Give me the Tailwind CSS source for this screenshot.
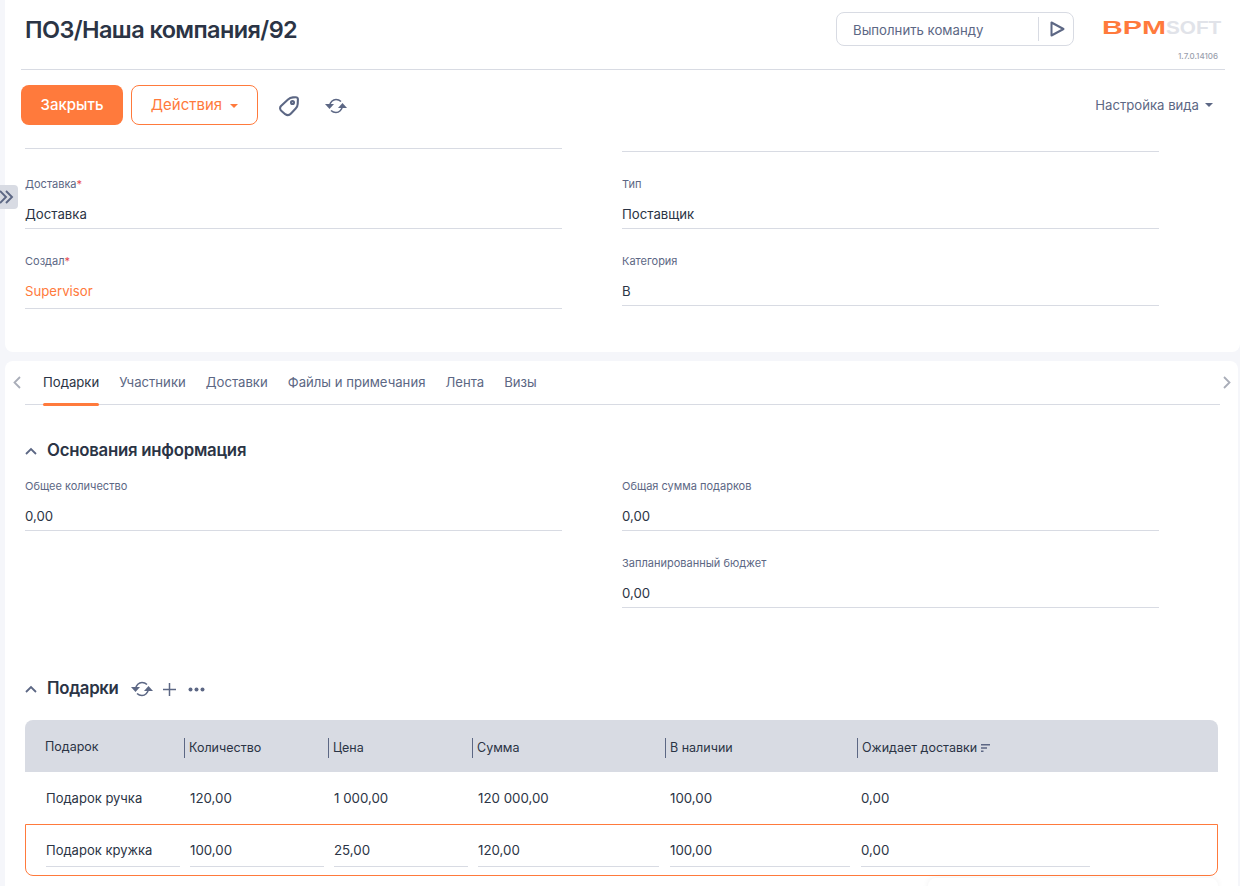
<!DOCTYPE html>
<html lang="ru">
<head>
<meta charset="UTF-8" />
<title>ПОЗ/Наша компания/92</title>
<script src="https://cdn.jsdelivr.net/npm/@tailwindcss/browser@4"></script>
</head>
<body class="bg-[#f5f6fa] font-['Inter',sans-serif] text-[13px] text-[#2b3445] h-[886px] w-[1240px] overflow-hidden relative">

<!-- panel toggle -->
<div class="absolute left-0 top-[185px] w-[18px] h-[24px] bg-[#d8dbe3] rounded-r flex items-center z-10">
  <svg width="15" height="14" viewBox="0 0 15 14" fill="none" stroke="#5c6784" stroke-width="1.900"><path d="M0 1l6 6-6 6M6 1l6 6-6 6"/></svg>
</div>

<!-- top card -->
<div class="ml-[5px] h-[352px] bg-white rounded-b-lg">
  <header class="ml-[16px] mr-[15px] h-[70px] border-b border-[#d8dbe3] flex items-start">
    <h1 class="ml-[4px] mt-[15px] text-[23.500px] leading-[30px] font-semibold text-[#2b3445] tracking-[-0.6px]">ПОЗ/Наша компания/92</h1>
    <div class="ml-auto mt-[12px] w-[238px] h-[34px] border border-[#d8dbe3] rounded-lg flex items-center">
      <span class="pl-[16px] pt-[3px] text-[#5c6784] text-[13.200px] flex-1">Выполнить команду</span>
      <span class="h-[24px] border-l border-[#d8dbe3]"></span>
      <svg class="ml-[11px] mr-[8px]" width="15" height="16" viewBox="0 0 15 16" fill="none" stroke="#5c6784" stroke-width="2" stroke-linejoin="round"><path d="M1.500 1.500v13l12-6.500z"/></svg>
    </div>
    <!-- logo -->
    <div class="w-[151px] mt-[12px] flex flex-col items-end">
      <div class="h-[32px] w-[119px] mr-[4px] flex items-center font-['Liberation_Sans',sans-serif] font-bold text-[18px] whitespace-nowrap">
        <span class="w-[64px] text-[#ff7a3c] scale-x-[1.6] origin-left">BPM</span><span class="w-[55px] text-[#e1e3e9] scale-x-[1.15] origin-left">SOFT</span>
      </div>
      <span class="mt-[7px] mr-[7px] text-[8px] leading-[10px] text-[#9aa0ad] font-medium">1.7.0.14106</span>
    </div>
  </header>

  <div class="ml-[16px] mr-[15px] h-[40px] mt-[15px] flex items-center">
    <button class="w-[102px] h-[40px] pt-[1px] rounded-lg bg-[#ff7a3c] text-white text-[15px] font-medium">Закрыть</button>
    <button class="ml-[8px] w-[127px] h-[40px] pt-[1px] rounded-lg border border-[#ff7a3c] text-[#ff7a3c] text-[15px] flex items-center justify-center gap-[8px]">Действия <span class="w-0 h-0 border-x-[4px] border-x-transparent border-t-[4px] border-t-[#ff7a3c]"></span></button>
    <svg class="ml-[21px] mt-[3px]" width="20" height="21" viewBox="0 0 20 21" fill="none" stroke="#5c6784" stroke-width="2.100" stroke-linejoin="round"><path d="M2 10L9 3.500C10.500 2.200 12 1.600 14 1.400L16.500 1.200C18 1.100 19 2 18.900 3.500L18.700 8C18.600 10 18 11.300 16.700 12.600L12 17.500C10.500 19.200 8 19.500 6.200 18.200L2.500 15C.8 13.500 .6 11.500 2 10z"/><circle cx="13.500" cy="6.500" r="1.500"/></svg>
    <svg class="ml-[26px] mt-[1px]" width="22" height="16" viewBox="0 0 22 16" fill="none"><use href="#sync"/></svg>
    <span class="ml-auto mr-[12px] pt-[1px] text-[#5c6784] text-[13.150px] flex items-center gap-[6px]">Настройка вида <span class="w-0 h-0 border-x-[4px] border-x-transparent border-t-[4px] border-t-[#5c6784]"></span></span>
  </div>

  <div class="ml-[20px] mt-[23px] grid grid-cols-[537px_537px] gap-x-[60px]">
    <div class="h-[1px] bg-[#d8dbe3]"></div>
    <div class="h-[1px] bg-[#d8dbe3] mt-[3px]"></div>
  </div>
  <div class="ml-[20px] mt-[25px] grid grid-cols-[537px_537px] gap-x-[60px] gap-y-[25px] items-start">
    <div class="h-[52px] border-b border-[#d8dbe3]">
      <div class="text-[11px] leading-[14px] text-[#5c6784]">Доставка<span class="text-[#e5484d]">*</span></div>
      <div class="mt-[13px] text-[13.200px] leading-[20px]">Доставка</div>
    </div>
    <div class="h-[52px] border-b border-[#d8dbe3]">
      <div class="text-[11px] leading-[14px] text-[#5c6784]">Тип</div>
      <div class="mt-[13px] text-[13.200px] leading-[20px]">Поставщик</div>
    </div>
    <div class="h-[55px] border-b border-[#d8dbe3]">
      <div class="text-[11px] leading-[14px] text-[#5c6784]">Создал<span class="text-[#e5484d]">*</span></div>
      <div class="mt-[13px] text-[13.200px] leading-[20px] text-[#ff7a3c]">Supervisor</div>
    </div>
    <div class="h-[52px] border-b border-[#d8dbe3]">
      <div class="text-[11px] leading-[14px] text-[#5c6784]">Категория</div>
      <div class="mt-[13px] text-[13.200px] leading-[20px]">B</div>
    </div>
  </div>
</div>

<!-- detail card -->
<div class="ml-[5px] mr-[2px] mt-[9px] h-[525px] bg-white rounded-t-lg relative">
  <nav class="h-[44px] flex items-stretch relative">
    <svg class="absolute left-[7px] top-[15px]" width="10" height="13" viewBox="0 0 10 13" fill="none" stroke="#a9adb8" stroke-width="1.800"><path d="M8 1L2.500 6.500 8 12"/></svg>
    <svg class="absolute right-[6px] top-[15px]" width="10" height="13" viewBox="0 0 10 13" fill="none" stroke="#a9adb8" stroke-width="1.800"><path d="M2 1l5.500 5.500L2 12"/></svg>
    <div class="ml-[20px] w-[1195px] border-b border-[#d8dbe3] flex gap-[20px] pl-[18px] text-[13.150px] text-[#5c6784]">
      <span class="relative h-[44px] leading-[43px] text-[#2b3445]">Подарки<span class="absolute left-0 right-0 bottom-[-1px] h-[3px] rounded-full bg-[#ff7a3c]"></span></span>
      <span class="leading-[43px]">Участники</span>
      <span class="leading-[43px]">Доставки</span>
      <span class="leading-[43px]">Файлы и примечания</span>
      <span class="leading-[43px]">Лента</span>
      <span class="leading-[43px]">Визы</span>
    </div>
  </nav>

  <section class="ml-[20px] mt-[34px]">
    <div class="flex items-center h-[24px]">
      <svg width="12" height="8" viewBox="0 0 12 8" fill="none" stroke="#5c6784" stroke-width="1.800"><path d="M1 7l5-5 5 5"/></svg>
      <h2 class="ml-[10px] text-[16.800px] font-semibold text-[#2b3445] tracking-[-0.25px]">Основания информация</h2>
    </div>
    <div class="mt-[16px] grid grid-cols-[537px_537px] gap-x-[60px] gap-y-[25px]">
      <div class="h-[52px] border-b border-[#d8dbe3]">
        <div class="text-[11px] leading-[14px] text-[#5c6784]">Общее количество</div>
        <div class="mt-[13px] text-[13.200px] leading-[20px]">0,00</div>
      </div>
      <div class="h-[52px] border-b border-[#d8dbe3]">
        <div class="text-[11px] leading-[14px] text-[#5c6784]">Общая сумма подарков</div>
        <div class="mt-[13px] text-[13.200px] leading-[20px]">0,00</div>
      </div>
      <div></div>
      <div class="h-[52px] border-b border-[#d8dbe3]">
        <div class="text-[11px] leading-[14px] text-[#5c6784]">Запланированный бюджет</div>
        <div class="mt-[13px] text-[13.200px] leading-[20px]">0,00</div>
      </div>
    </div>
  </section>

  <section class="ml-[20px] mr-[20px] mt-[69px]">
    <div class="flex items-center h-[24px]">
      <svg width="12" height="8" viewBox="0 0 12 8" fill="none" stroke="#5c6784" stroke-width="1.800"><path d="M1 7l5-5 5 5"/></svg>
      <h2 class="ml-[10px] text-[16.800px] font-semibold text-[#2b3445] tracking-[-0.3px]">Подарки</h2>
      <svg class="ml-[12px]" width="22" height="16" viewBox="0 0 22 16" fill="none"><use href="#sync"/></svg>
      <svg class="ml-[10px]" width="13" height="13" viewBox="0 0 13 13" fill="none" stroke="#5c6784" stroke-width="1.500"><path d="M6.500 0v13M0 6.500h13"/></svg>
      <svg class="ml-[12px]" width="17" height="5" viewBox="0 0 17 5" fill="#5c6784"><circle cx="2.500" cy="2.500" r="2"/><circle cx="8.500" cy="2.500" r="2"/><circle cx="14.500" cy="2.500" r="2"/></svg>
    </div>

    <div class="mt-[19px] h-[52px] pt-[3px] bg-[#d8dbe3] rounded-t-lg grid grid-cols-[159px_144px_144px_193px_192px_1fr] items-center text-[12.500px]">
      <div class="pl-[20px]">Подарок</div>
      <div class="border-l border-[#5c6784] h-[20px] leading-[20px] pl-[4px]">Количество</div>
      <div class="border-l border-[#5c6784] h-[20px] leading-[20px] pl-[4px]">Цена</div>
      <div class="border-l border-[#5c6784] h-[20px] leading-[20px] pl-[4px]">Сумма</div>
      <div class="border-l border-[#5c6784] h-[20px] leading-[20px] pl-[4px]">В наличии</div>
      <div class="border-l border-[#5c6784] h-[20px] leading-[20px] pl-[4px] flex items-center gap-[4px]">Ожидает доставки
        <svg width="9" height="10" viewBox="0 0 9 10" fill="#5c6784"><path d="M0 1h9v1.500H0zM0 4.200h6v1.500H0zM0 7.400h2.500v1.500H0z"/></svg>
      </div>
    </div>
    <div class="h-[52px] pt-[2px] grid grid-cols-[165px_144px_144px_192px_191px_1fr] items-center text-[13px]">
      <div class="pl-[21px]">Подарок ручка</div>
      <div class="text-[13.300px]">120,00</div>
      <div class="text-[13.300px]">1 000,00</div>
      <div class="text-[13.300px]">120 000,00</div>
      <div class="text-[13.300px]">100,00</div>
      <div class="text-[13.300px]">0,00</div>
    </div>
    <div class="h-[52px] border border-[#ff7a3c] rounded-b-lg grid grid-cols-[134px_134px_134px_181px_181px_230px] gap-x-[10px] pl-[20px] text-[13px]">
      <div class="mt-[15px] h-[27px] leading-[20px] border-b border-[#d8dbe3]">Подарок кружка</div>
      <div class="mt-[15px] h-[27px] leading-[20px] border-b border-[#d8dbe3] text-[13.300px]">100,00</div>
      <div class="mt-[15px] h-[27px] leading-[20px] border-b border-[#d8dbe3] text-[13.300px]">25,00</div>
      <div class="mt-[15px] h-[27px] leading-[20px] border-b border-[#d8dbe3] text-[13.300px]">120,00</div>
      <div class="mt-[15px] ml-[1px] h-[27px] leading-[20px] border-b border-[#d8dbe3] text-[13.300px]">100,00</div>
      <div class="mt-[15px] ml-[1px] h-[27px] leading-[20px] border-b border-[#d8dbe3] text-[13.300px]">0,00</div>
    </div>
  </section>
  <div class="absolute left-[923px] top-[517px] w-[290px] h-[40px] bg-white rounded-lg shadow-[0_0_6px_rgba(0,0,0,0.06)]"></div>
</div>

<svg class="hidden"><defs>
  <g id="sync" stroke="#5c6784" stroke-width="1.500" fill="none">
    <path d="M4.500 8C5 4 8 1.500 11 1.500c2 0 3.500.6 5 2"/>
    <path d="M17.500 8c-.5 4-3.500 6.500-6.500 6.500-2 0-3.500-.6-5-2"/>
    <path d="M0 6h9l-4.500 5z" fill="#5c6784" stroke="none"/>
    <path d="M13 10h9l-4.500-5z" fill="#5c6784" stroke="none"/>
  </g>
</defs></svg>
</body>
</html>
